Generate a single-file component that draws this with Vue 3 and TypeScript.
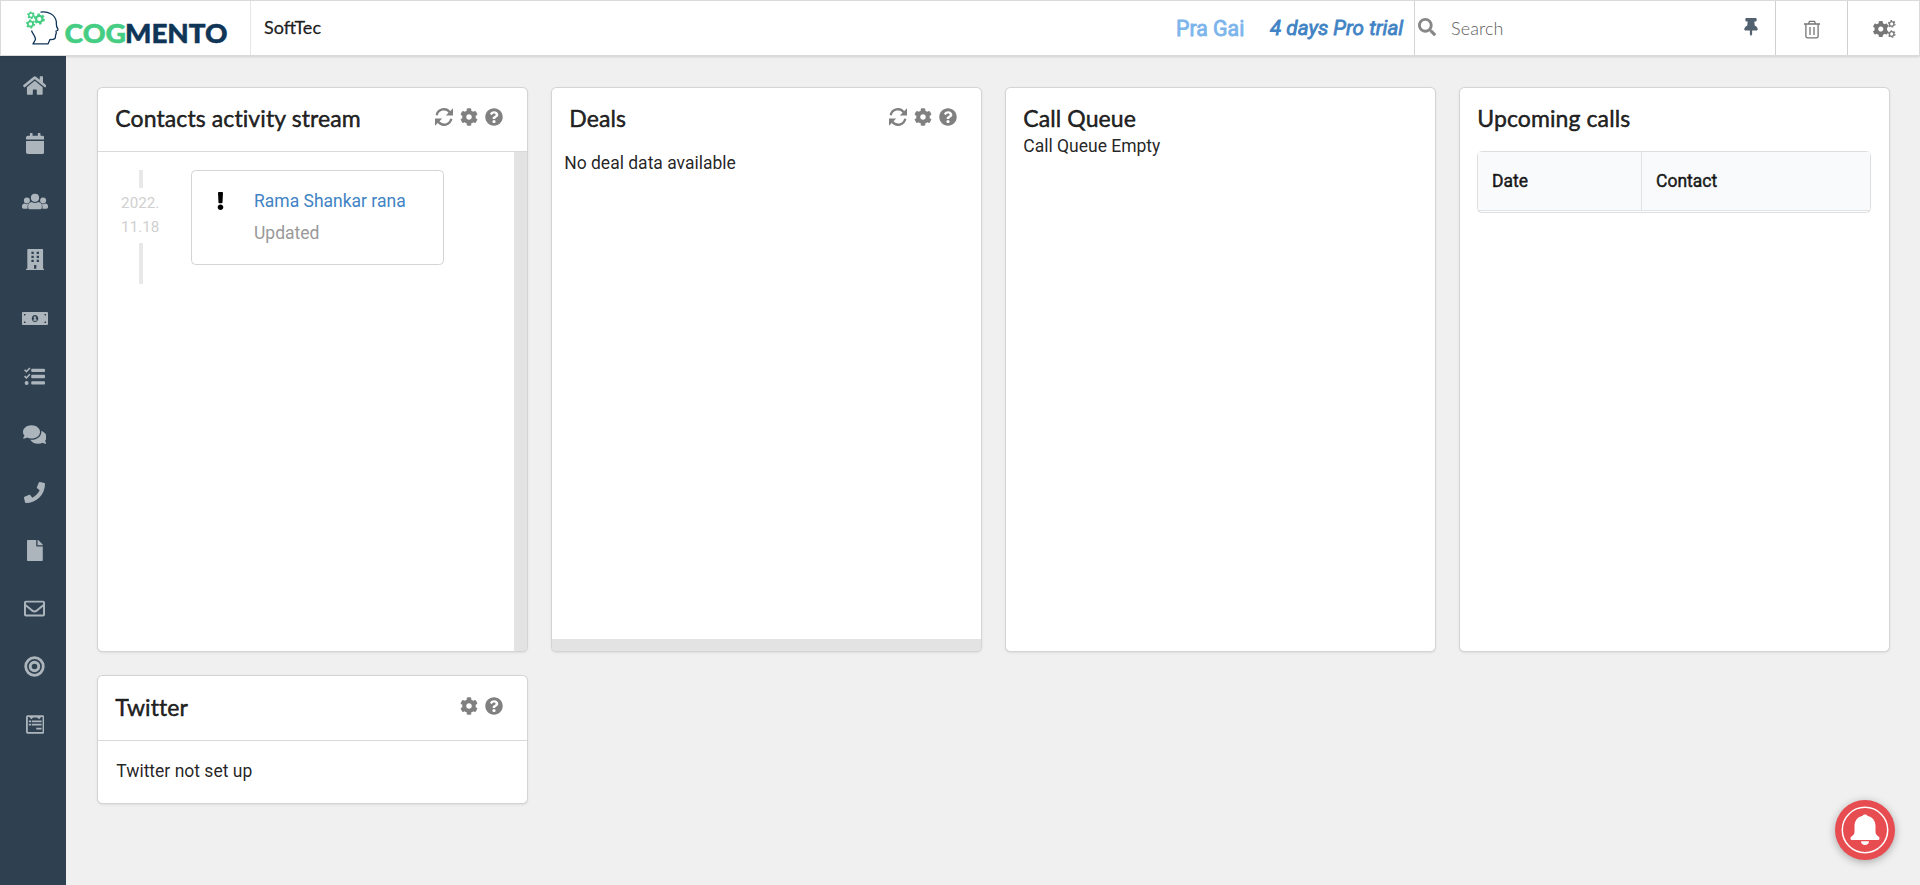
<script setup lang="ts">
interface Icon {
  name: string
  box: string
  w: number
  h: number
  d: string
}

const cog =
  'M487.4 315.7l-42.6-24.6c4.3-23.2 4.3-47 0-70.2l42.6-24.6c4.9-2.8 7.1-8.6 5.5-14-11.1-35.6-30-67.8-54.7-94.6-3.8-4.1-10-5.1-14.8-2.3L380.8 110c-17.9-15.4-38.5-27.3-60.8-35.1V25.8c0-5.6-3.9-10.5-9.4-11.7-36.7-8.2-74.3-7.8-109.2 0-5.5 1.2-9.4 6.1-9.4 11.7V75c-22.2 7.9-42.8 19.8-60.8 35.1L88.7 85.5c-4.9-2.8-11-1.9-14.8 2.3-24.7 26.7-43.6 58.9-54.7 94.6-1.7 5.4.6 11.2 5.5 14L67.3 221c-4.3 23.2-4.3 47 0 70.2l-42.6 24.6c-4.9 2.8-7.1 8.6-5.5 14 11.1 35.6 30 67.8 54.7 94.6 3.8 4.1 10 5.1 14.8 2.3l42.6-24.6c17.9 15.4 38.5 27.3 60.8 35.1v49.2c0 5.6 3.9 10.5 9.4 11.7 36.7 8.2 74.3 7.8 109.2 0 5.5-1.2 9.4-6.1 9.4-11.7v-49.2c22.2-7.9 42.8-19.8 60.8-35.1l42.6 24.6c4.9 2.8 11 1.9 14.8-2.3 24.7-26.7 43.6-58.9 54.7-94.6 1.5-5.5-.7-11.3-5.6-14.1zM256 336c-44.1 0-80-35.9-80-80s35.9-80 80-80 80 35.9 80 80-35.9 80-80 80z'
const question =
  'M504 256c0 136.997-111.043 248-248 248S8 392.997 8 256C8 119.083 119.043 8 256 8s248 111.083 248 248zM262.655 90c-54.497 0-89.255 22.957-116.549 63.758-3.536 5.286-2.353 12.415 2.715 16.258l34.699 26.31c5.205 3.947 12.621 3.008 16.665-2.122 17.864-22.658 30.113-35.797 57.303-35.797 20.429 0 45.698 13.148 45.698 32.958 0 14.976-12.363 22.667-32.534 33.976C247.128 238.528 216 254.941 216 296v4c0 6.627 5.373 12 12 12h56c6.627 0 12-5.373 12-12v-1.333c0-28.462 83.186-29.647 83.186-106.667 0-58.002-60.165-102-116.531-102zM256 338c-25.365 0-46 20.635-46 46 0 25.364 20.635 46 46 46s46-20.636 46-46c0-25.365-20.635-46-46-46z'

const nav: Icon[] = [
  { name: 'home', box: '0 0 576 512', w: 23.6, h: 21, d: 'M280.37 148.26L96 300.11V464a16 16 0 0 0 16 16l112.06-.29a16 16 0 0 0 15.92-16V368a16 16 0 0 1 16-16h64a16 16 0 0 1 16 16v95.64a16 16 0 0 0 16 16.05L464 480a16 16 0 0 0 16-16V300L295.67 148.26a12.19 12.19 0 0 0-15.3 0zM571.6 251.47L488 182.56V44.05a12 12 0 0 0-12-12h-56a12 12 0 0 0-12 12v72.61L318.47 43a48 48 0 0 0-61 0L4.34 251.47a12 12 0 0 0-1.6 16.9l25.5 31A12 12 0 0 0 45.15 301l235.22-193.74a12.19 12.19 0 0 1 15.3 0L530.9 301a12 12 0 0 0 16.9-1.6l25.5-31a12 12 0 0 0-1.7-16.93z' },
  { name: 'calendar', box: '0 0 448 512', w: 18.4, h: 21, d: 'M12 192h424c6.6 0 12 5.4 12 12v260c0 26.5-21.5 48-48 48H48c-26.5 0-48-21.5-48-48V204c0-6.6 5.4-12 12-12zm436-44v-36c0-26.5-21.5-48-48-48h-48V12c0-6.6-5.4-12-12-12h-40c-6.6 0-12 5.4-12 12v52H160V12c0-6.6-5.4-12-12-12h-40c-6.6 0-12 5.4-12 12v52H48C21.5 64 0 85.5 0 112v36c0 6.6 5.4 12 12 12h424c6.6 0 12-5.4 12-12z' },
  { name: 'users', box: '0 0 640 512', w: 26, h: 21, d: 'M320 64a101 101 0 1 1 0 202a101 101 0 1 1 0-202zM120 160a74 74 0 1 1 0 148a74 74 0 1 1 0-148zM520 160a74 74 0 1 1 0 148a74 74 0 1 1 0-148zM240 268c48 32 112 32 160 0 52 4 88 46 88 98v46c0 20-16 36-36 36H188c-20 0-36-16-36-36v-46c0-52 36-94 88-98zM64 306c32 22 70 24 102 6-22 26-30 48-30 78v42H36c-20 0-36-14-36-34v-28c0-34 28-62 64-64zM576 306c-32 22-70 24-102 6 22 26 30 48 30 78v42h100c20 0 36-14 36-34v-28c0-34-28-62-64-64z' },
  { name: 'building', box: '0 0 448 512', w: 18.4, h: 21, d: 'M436 480h-20V24c0-13.3-10.7-24-24-24H56C42.7 0 32 10.7 32 24v456H12c-6.6 0-12 5.4-12 12v20h448v-20c0-6.6-5.4-12-12-12zM132 68h56v56h-56zM260 68h56v56h-56zM132 164h56v56h-56zM260 164h56v56h-56zM132 260h56v56h-56zM260 260h56v56h-56zM196 388h56v92h-56z' },
  { name: 'money', box: '0 0 640 512', w: 26, h: 21, d: 'M24 96h592q24 0 24 24v272q0 24-24 24H24q-24 0-24-24V120q0-24 24-24zM48 144v44q44 0 44-44zM592 144v44q-44 0-44-44zM48 368v-44q44 0 44 44zM592 368v-44q-44 0-44 44zM320 168c-46 0-80 38-80 88s34 88 80 88 80-38 80-88-34-88-80-88zM296 206h44v74h24v30h-88v-30h26v-40h-20z' },
  { name: 'tasks', box: '0 0 512 512', w: 21, h: 21, d: 'M0 106l28-28 32 30 70-74 28 28-98 102zM0 260l28-28 32 30 70-74 28 28-98 102zM64 368a48 48 0 1 1 0 96a48 48 0 1 1 0-96zM200 64h288q24 0 24 24v32q0 24-24 24H200q-24 0-24-24V88q0-24 24-24zM200 216h288q24 0 24 24v32q0 24-24 24H200q-24 0-24-24v-32q0-24 24-24zM200 372h288q24 0 24 24v32q0 24-24 24H200q-24 0-24-24v-32q0-24 24-24z' },
  { name: 'comments', box: '0 0 576 512', w: 23.6, h: 21, d: 'M416 192c0-88.4-93.1-160-208-160S0 103.6 0 192c0 34.3 14.1 65.9 38 92-13.4 30.2-35.5 54.2-35.8 54.5-2.2 2.3-2.8 5.7-1.5 8.7S4.8 352 8 352c36.6 0 66.9-12.3 88.7-25 32.2 15.7 70.3 25 111.3 25 114.9 0 208-71.6 208-160zm122 220c23.9-26 38-57.7 38-92 0-66.9-53.5-124.2-129.3-148.1.9 6.6 1.3 13.3 1.3 20.1 0 105.9-107.7 192-240 192-10.8 0-21.3-.8-31.7-1.9C207.8 439.6 281.8 480 368 480c41 0 79.1-9.2 111.3-25 21.8 12.7 52.1 25 88.7 25 3.2 0 6.1-1.9 7.3-4.8 1.3-2.9.7-6.3-1.5-8.7-.3-.3-22.4-24.2-35.8-54.5z' },
  { name: 'phone', box: '0 0 512 512', w: 21, h: 21, d: 'M493.4 24.6l-104-24c-11.3-2.6-22.9 3.3-27.5 13.9l-48 112c-4.2 9.8-1.4 21.3 6.9 28l60.6 49.6c-36 76.7-98.9 140.5-177.2 177.2l-49.6-60.6c-6.8-8.3-18.2-11.1-28-6.9l-112 48C3.9 366.5-2 378.1.6 389.4l24 104C27.1 504.2 36.7 512 48 512c256.1 0 464-207.5 464-464 0-11.2-7.7-20.9-18.6-23.4z' },
  { name: 'file', box: '0 0 384 512', w: 15.8, h: 21, d: 'M224 136V0H24C10.7 0 0 10.7 0 24v464c0 13.3 10.7 24 24 24h336c13.3 0 24-10.7 24-24V160H248c-13.2 0-24-10.8-24-24zm160-14.1v6.1H256V0h6.1c6.4 0 12.5 2.5 17 7l97.9 98c4.5 4.5 7 10.6 7 16.9z' },
  { name: 'mail', box: '0 0 512 512', w: 21, h: 21, d: 'M464 64H48C21.49 64 0 85.49 0 112v288c0 26.51 21.49 48 48 48h416c26.51 0 48-21.49 48-48V112c0-26.51-21.49-48-48-48zm0 48v40.805c-22.422 18.259-58.168 46.651-134.587 106.49-16.841 13.247-50.201 45.072-73.413 44.701-23.208.375-56.579-31.459-73.413-44.701C106.18 199.465 70.425 171.067 48 152.805V112h416zM48 400V214.398c22.914 18.251 55.409 43.862 104.938 82.646 21.857 17.205 60.134 55.186 103.062 54.955 42.717.231 80.509-37.199 103.053-54.947 49.528-38.783 82.032-64.401 104.947-82.653V400H48z' },
  { name: 'target', box: '0 0 512 512', w: 21, h: 21, d: 'M256 8a248 248 0 1 0 0 496a248 248 0 1 0 0-496zM256 76a180 180 0 1 1 0 360a180 180 0 1 1 0-360zM256 116a140 140 0 1 0 0 280a140 140 0 1 0 0-280zM256 188a68 68 0 1 1 0 136a68 68 0 1 1 0-136z' },
  { name: 'form', box: '0 0 448 512', w: 18.4, h: 21, d: 'M40 32h368q40 0 40 40v368q0 40-40 40H40q-40 0-40-40V72q0-40 40-40zM44 76v360h360V76h-36l-48 50-50-40h-92l-50 40-48-50zM68 160h60v42H68zM146 160h234v42H146zM68 240h60v42H68zM146 240h234v42H146zM250 334h130v42H250z' },
]
</script>

<template>
  <div class="page">
    <header class="topbar">
      <div class="brand">
        <svg width="206" height="54" viewBox="0 0 206 54">
          <g fill="none" stroke="#0f3557" stroke-width="1.3" stroke-linejoin="round">
            <path d="M39.500 11.200C47 10 54 13.500 55.300 20.500C55.600 23.500 54.500 24.500 57 28.300L56.600 29.500L55 30L55.300 32L54.500 34.500C55 38 53 38.700 49 38.500L47 42.900H32L34.500 38.500C34.500 35 31.500 33 30.500 29.500" />
          </g>
          <g fill="none" stroke="#44cd83">
            <circle cx="38.300" cy="18" r="3.200" stroke-width="2.200" />
            <circle cx="38.300" cy="18" r="4.700" stroke-width="1.800" stroke-dasharray="2.500 2.422" />
            <circle cx="30" cy="14.300" r="2.200" stroke-width="1.500" />
            <circle cx="30" cy="14.300" r="3.200" stroke-width="1.300" stroke-dasharray="1.700 1.651" />
            <circle cx="29.500" cy="23" r="2.600" stroke-width="1.800" />
            <circle cx="29.500" cy="23" r="3.800" stroke-width="1.500" stroke-dasharray="2 1.979" />
          </g>
          <text x="63.500" y="42" textLength="61.500" lengthAdjust="spacingAndGlyphs" class="logo green">COG</text>
          <text x="124" y="42" textLength="102.500" lengthAdjust="spacingAndGlyphs" class="logo navy">MENTO</text>
        </svg>
      </div>
      <div class="company">SoftTec</div>
      <div class="user">Pra Gai</div>
      <div class="trial">4 days Pro trial</div>
      <div class="search">
        <svg class="glass" viewBox="0 0 512 512"><path d="M505 442.7L405.3 343c-4.5-4.5-10.6-7-17-7H372c27.6-35.3 44-79.7 44-128C416 93.1 322.9 0 208 0S0 93.1 0 208s93.1 208 208 208c48.3 0 92.7-16.4 128-44v16.3c0 6.4 2.5 12.5 7 17l99.7 99.7c9.4 9.4 24.6 9.4 33.9 0l28.3-28.3c9.4-9.4 9.4-24.6.1-34zM208 336c-70.7 0-128-57.2-128-128 0-70.7 57.2-128 128-128 70.7 0 128 57.2 128 128 0 70.7-57.2 128-128 128z" /></svg>
        <span>Search</span>
        <svg class="pin" viewBox="0 0 384 512"><path d="M298.028 214.267L285.793 96H328c13.255 0 24-10.745 24-24V24c0-13.255-10.745-24-24-24H56C42.745 0 32 10.745 32 24v48c0 13.255 10.745 24 24 24h42.207L85.972 214.267C37.465 236.82 0 277.261 0 328c0 13.255 10.745 24 24 24h136v104.007c0 1.242.289 2.467.845 3.578l24 48c2.941 5.882 11.364 5.893 14.311 0l24-48a8.008 8.008 0 0 0 .845-3.578V352h136c13.255 0 24-10.745 24-24-.001-51.183-37.983-91.42-85.973-113.733z" /></svg>
      </div>
      <div class="tool">
        <svg width="16" height="19" viewBox="0 0 16 19" fill="none" stroke="#767676" stroke-width="1.3">
          <path d="M0 4H16M1.900 4V16.200Q1.900 17.800 3.500 17.800H12.500Q14.100 17.800 14.100 16.200V4M4.500 4L5.500 1.300H10.500L11.500 4M6 7V15M10 7V15" />
        </svg>
      </div>
      <div class="tool last">
        <svg width="23" height="18" viewBox="0 0 23 18">
          <svg x="0" y="1" width="15.600" height="16" viewBox="16 8 480 496" preserveAspectRatio="none"><path :d="cog" fill="#767676" /></svg>
          <g fill="none" stroke="#767676">
            <circle cx="18.700" cy="3.900" r="2.300" stroke-width="1.300" />
            <circle cx="18.700" cy="3.900" r="3.300" stroke-width="1.100" stroke-dasharray="1.730 1.725" />
            <circle cx="18.700" cy="14" r="2.300" stroke-width="1.300" />
            <circle cx="18.700" cy="14" r="3.300" stroke-width="1.100" stroke-dasharray="1.730 1.725" />
          </g>
        </svg>
      </div>
    </header>

    <div class="body">
      <nav class="side">
        <a v-for="i in nav" :key="i.name" class="nav-item">
          <svg :viewBox="i.box" :width="i.w" :height="i.h"><path :d="i.d" fill-rule="evenodd" /></svg>
        </a>
      </nav>

      <main class="grid">
        <section class="card tall framed">
          <div class="head">
            <h2>Contacts activity stream</h2>
            <div class="actions">
              <svg viewBox="0 0 18 18"><path d="M1.700 7.200A7.300 7.300 0 0 1 14.700 4.200M16.300 10.800A7.300 7.300 0 0 1 3.300 13.800" fill="none" stroke="#808080" stroke-width="2.300" /><path d="M18 .2V7.400H10.800ZM0 17.800V10.600H7.200Z" /></svg>
              <svg viewBox="0 0 512 512"><path :d="cog" /></svg>
              <svg viewBox="0 0 512 512"><path :d="question" /></svg>
            </div>
          </div>
          <div class="stream">
            <div class="timeline">
              <i class="bar short"></i>
              <div class="date">2022.<br />11.18</div>
              <i class="bar"></i>
            </div>
            <div class="event">
              <svg class="bang" viewBox="0 0 192 512"><path d="M176 432c0 44.112-35.888 80-80 80s-80-35.888-80-80 35.888-80 80-80 80 35.888 80 80zM25.26 25.199l13.6 272C39.499 309.972 50.041 320 62.83 320h66.34c12.789 0 23.331-10.028 23.97-22.801l13.6-272C167.425 11.49 156.496 0 142.77 0H49.23C35.504 0 24.575 11.49 25.26 25.199z" /></svg>
              <div>
                <a class="name">Rama Shankar rana</a>
                <p class="what">Updated</p>
              </div>
            </div>
            <div class="vscroll"></div>
          </div>
        </section>

        <section class="card tall column">
          <div class="head">
            <h2>Deals</h2>
            <div class="actions">
              <svg viewBox="0 0 18 18"><path d="M1.700 7.200A7.300 7.300 0 0 1 14.700 4.200M16.300 10.800A7.300 7.300 0 0 1 3.300 13.800" fill="none" stroke="#808080" stroke-width="2.300" /><path d="M18 .2V7.400H10.800ZM0 17.800V10.600H7.200Z" /></svg>
              <svg viewBox="0 0 512 512"><path :d="cog" /></svg>
              <svg viewBox="0 0 512 512"><path :d="question" /></svg>
            </div>
          </div>
          <p class="nodeal">No deal data available</p>
          <div class="hscroll"></div>
        </section>

        <section class="card tall">
          <div class="head brief"><h2>Call Queue</h2></div>
          <p class="queue">Call Queue Empty</p>
        </section>

        <section class="card tall">
          <div class="head"><h2>Upcoming calls</h2></div>
          <div class="table">
            <div class="row">
              <div class="th first">Date</div>
              <div class="th">Contact</div>
            </div>
          </div>
        </section>

        <section class="card framed twitter">
          <div class="head">
            <h2>Twitter</h2>
            <div class="actions">
              <svg viewBox="0 0 512 512"><path :d="cog" /></svg>
              <svg viewBox="0 0 512 512"><path :d="question" /></svg>
            </div>
          </div>
          <p class="tw">Twitter not set up</p>
        </section>
      </main>
    </div>

    <button class="bell">
      <svg width="60" height="60" viewBox="0 0 60 60">
        <circle cx="30" cy="30" r="22.700" fill="none" stroke="#fff" stroke-width="1.500" />
        <path d="M30 14.500c1.500 0 2.300.6 2.700 1.500 5 1.200 7.800 5 7.800 10v6c0 2.500 2 3.500 3.500 5 .8.900.8 3-.8 3H16.800c-1.600 0-1.600-2.100-.8-3 1.500-1.500 3.500-2.500 3.500-5v-6c0-5 2.800-8.800 7.800-10 .4-.9 1.200-1.500 2.700-1.500zM26 41.200h8c0 2.500-1.800 3.800-4 3.800s-4-1.300-4-3.800z" fill="#fff" />
      </svg>
    </button>
  </div>
</template>

<style>
body {
  margin: 0;
  background: #f0f0f0;
}
</style>

<style scoped>
* {
  box-sizing: border-box;
}
.page {
  height: 885px;
  display: flex;
  flex-direction: column;
  overflow: hidden;
  background: #f0f0f0;
  color: rgba(0, 0, 0, 0.87);
  font-family: Roboto, "Liberation Sans", sans-serif;
  font-size: 17.5px;
  line-height: 24px;
}
h2,
p {
  margin: 0;
}
.topbar {
  position: relative;
  z-index: 1;
  flex: none;
  height: 56px;
  display: flex;
  background: #fff;
  border: 1px solid #dadada;
  box-shadow: 0 1px 2px rgba(34, 36, 38, 0.15);
}
.brand {
  width: 250px;
  border-right: 1px solid #e6e6e6;
}
.brand svg {
  display: block;
  overflow: visible;
}
.logo {
  font: 900 27px Lato, sans-serif;
  stroke-width: 0.5px;
}
.green {
  fill: #44cd83;
  stroke: #44cd83;
}
.navy {
  fill: #0f3557;
  stroke: #0f3557;
}
.company {
  width: 913px;
  padding: 14px 0 0 13px;
  font: 400 18px/24px Lato, sans-serif;
  -webkit-text-stroke: 0.3px currentColor;
}
.user {
  width: 94px;
  padding-top: 16px;
  padding-left: 12px;
  font-size: 21.3px;
  color: #7cb5ec;
  white-space: nowrap;
  -webkit-text-stroke: 0.8px currentColor;
}
.trial {
  width: 156px;
  padding-top: 15px;
  padding-left: 12px;
  font-size: 20.7px;
  font-style: italic;
  color: #4183c4;
  white-space: nowrap;
  -webkit-text-stroke: 0.8px currentColor;
}
.search {
  width: 361px;
  display: flex;
  align-items: flex-start;
  border-left: 1px solid #d4d4d5;
  font: 300 18px/24px Lato, sans-serif;
  color: #606060;
}
.glass {
  width: 18px;
  height: 18px;
  margin: 17px 15px 0 3px;
  fill: #878787;
}
.search span {
  margin-top: 15px;
  letter-spacing: 0.1px;
}
.pin {
  width: 14px;
  height: 18px;
  margin: 17px 17px 0 auto;
  fill: #526170;
}
.tool {
  width: 72px;
  display: flex;
  align-items: center;
  justify-content: center;
  padding-top: 3px;
  border-left: 1px solid #d0d0d0;
}
.last {
  flex: 1;
  padding-top: 2px;
  padding-left: 2px;
}
.body {
  flex: 1;
  display: flex;
}
.side {
  width: 66px;
  padding: 0.5px 0 0 3.4px;
  background: #2f4050;
}
.nav-item {
  height: 58.14px;
  display: flex;
  align-items: center;
  justify-content: center;
}
.nav-item svg {
  fill: #adb5bc;
}
.grid {
  flex: 1;
  display: grid;
  grid-template-columns: repeat(4, 429.2px);
  grid-auto-rows: max-content;
  gap: 25px 24.8px;
  padding: 32px 0 0 31.7px;
}
.card {
  position: relative;
  background: #fff;
  border-radius: 4.5px;
  box-shadow: 0 0 0 1px #d4d4d5, 0 1px 3px 0 #c8c8c9;
}
.tall {
  height: 563px;
}
.column {
  display: flex;
  flex-direction: column;
}
.head {
  height: 63px;
  display: flex;
  justify-content: space-between;
  align-items: flex-start;
  padding: 14px 23.5px 0 17.6px;
}
.framed .head {
  height: 64px;
  border-bottom: 1px solid #d9d9da;
}
.twitter .head {
  height: 65px;
  padding-top: 15px;
}
.brief {
  height: 46px;
}
h2 {
  font: 400 23px/32px Lato, sans-serif;
  font-variant-ligatures: none;
  letter-spacing: 0.1px;
  -webkit-text-stroke: 0.5px currentColor;
}
.actions {
  display: flex;
  gap: 7px;
  padding-top: 6px;
}
.actions svg {
  width: 18px;
  height: 18px;
  fill: #808080;
}
.stream {
  height: 499px;
  display: flex;
  align-items: flex-start;
  padding-top: 18px;
}
.timeline {
  width: 93px;
  padding-right: 7px;
  display: flex;
  flex-direction: column;
  align-items: center;
}
.bar {
  width: 4px;
  height: 41px;
  background: #e8e8e8;
}
.short {
  height: 18px;
}
.date {
  margin: 3px 0 4px;
  padding-right: 1px;
  font-size: 15.2px;
  color: #d0d0d0;
}
.event {
  width: 253px;
  height: 95px;
  display: flex;
  padding: 18px 0 0 25px;
  border: 1px solid #d4d4d5;
  border-radius: 4.5px;
}
.bang {
  width: 7px;
  height: 18px;
  margin: 3px 30.3px 0 0;
  fill: #000;
}
.name {
  display: block;
  color: #4183c4;
}
.what {
  margin-top: 8px;
  color: #999;
}
.vscroll {
  width: 13px;
  height: 499px;
  margin: -18px 0 0 auto;
  background: #e3e3e3;
  border-bottom-right-radius: 4px;
}
.nodeal {
  padding-left: 12.5px;
}
.hscroll {
  height: 12px;
  margin-top: auto;
  background: #e3e3e3;
  border-radius: 0 0 4px 4px;
}
.queue {
  padding-left: 17.6px;
}
.table {
  height: 62px;
  margin: 0 18px 0 17.4px;
  border: 1px solid #dededf;
  border-radius: 4.5px;
}
.row {
  height: 59px;
  display: flex;
  background: #f9fafb;
  border-bottom: 1px solid #e1e2e3;
}
.th {
  padding: 17px 0 0 14px;
  font-size: 17.5px;
  -webkit-text-stroke: 0.5px currentColor;
}
.first {
  width: 164px;
  border-right: 1px solid #e1e2e3;
}
.tw {
  padding: 18px 18.6px 20px;
}
.bell {
  position: absolute;
  left: 1835px;
  top: 800px;
  width: 60px;
  height: 60px;
  padding: 0;
  border: 0;
  border-radius: 50%;
  background: #e74c50;
  box-shadow: 0 2px 9px rgba(0, 0, 0, 0.3);
}
</style>
